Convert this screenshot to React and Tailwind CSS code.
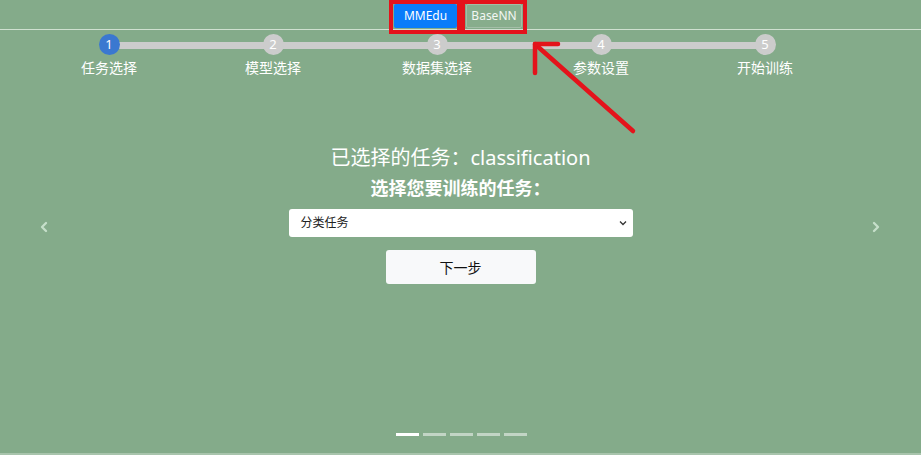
import { ChevronLeft, ChevronRight } from 'lucide-react';

const steps = ['任务选择', '模型选择', '数据集选择', '参数设置', '开始训练'];

export default function App() {
  return (
    <div
      className="relative w-[921px] h-[455px] overflow-hidden bg-[#84ab8a] text-white"
      style={{ fontFamily: '"Noto Sans", "Noto Sans CJK SC", sans-serif' }}
    >
      {/* top switcher */}
      <div className="flex justify-center gap-[9px] h-[30px] pt-[4px] pr-[5px] border-b border-[#cfe0d0]">
        <button className="h-[24px] w-[63px] bg-[#0a7cfa] rounded-[2px] text-[12px] text-white">MMEdu</button>
        <button className="h-[24px] w-[56px] bg-[#87ad8c] border border-[#a3bea7] rounded-[2px] text-[12px] text-[#f3f7f3]">BaseNN</button>
      </div>

      {/* stepper */}
      <div className="relative ml-[27px] w-[820px] mt-[4px] h-[48px]">
        <div className="absolute left-[82px] right-[82px] top-[8px] h-[7px] bg-[#cccccc]" />
        <div className="relative grid grid-cols-5">
          {steps.map((s, i) => (
            <div key={s} className="flex flex-col items-center">
              <div
                className={`w-[21px] h-[21px] rounded-full flex items-center justify-center text-[13px] leading-none ${i === 0 ? 'bg-[#3a78d0]' : 'bg-[#cccccc]'}`}
              >
                {i + 1}
              </div>
              <div className="mt-[4px] whitespace-nowrap text-[14px] leading-[17px]">{s}</div>
            </div>
          ))}
        </div>
      </div>

      {/* content */}
      <div className="flex flex-col items-center mt-[62px]">
        <div className="text-[20px] leading-[28px]">已选择的任务：classification</div>
        <div className="mt-[3px] text-[18px] leading-[26px] font-bold">选择您要训练的任务：</div>
        <div className="mt-[8px] w-[344px] h-[28px] bg-white rounded-[3px] flex items-center justify-between pl-[12px] pr-[6px] text-[12px] text-[#222]">
          <span>分类任务</span>
          <svg width="8" height="8" viewBox="0 0 8 8" fill="none" stroke="#333" strokeWidth="1.3">
            <path d="M1 2.5 L4 5.5 L7 2.5" />
          </svg>
        </div>
        <button className="mt-[13px] w-[150px] h-[34px] bg-[#f8f9fa] rounded-[3px] text-[14px] text-[#111]">下一步</button>
      </div>

      {/* carousel arrows */}
      <ChevronLeft className="absolute left-[36px] top-[219px] text-[#c6dfca]" size={16} strokeWidth={3.5} />
      <ChevronRight className="absolute left-[868px] top-[219px] text-[#c6dfca]" size={16} strokeWidth={3.5} />

      {/* indicators */}
      <div className="absolute left-0 right-0 top-[433px] flex justify-center gap-[4px] pl-[1px]">
        <div className="w-[23px] h-[3px] bg-white" />
        <div className="w-[23px] h-[3px] bg-white/50" />
        <div className="w-[23px] h-[3px] bg-white/50" />
        <div className="w-[23px] h-[3px] bg-white/50" />
        <div className="w-[23px] h-[3px] bg-white/50" />
      </div>
      <div className="absolute left-0 right-0 bottom-0 h-[2px] bg-[#a8c4ac]" />

      {/* red annotation boxes */}
      <div className="absolute left-[389px] top-0 w-[72px] h-[34px] border-[4px] border-[#e4131b]" />
      <div className="absolute left-[461px] top-0 w-[66px] h-[34px] border-[4px] border-[#e4131b]" />

      {/* red annotation arrow */}
      <svg className="absolute left-0 top-0 pointer-events-none" width="921" height="455">
        <g stroke="#e4131b" strokeWidth="4.5" strokeLinecap="round" fill="none">
          <path d="M633 131 L536 45" />
          <path d="M535 44 L535 73" />
          <path d="M535 44 L558 44" />
        </g>
      </svg>
    </div>
  );
}
